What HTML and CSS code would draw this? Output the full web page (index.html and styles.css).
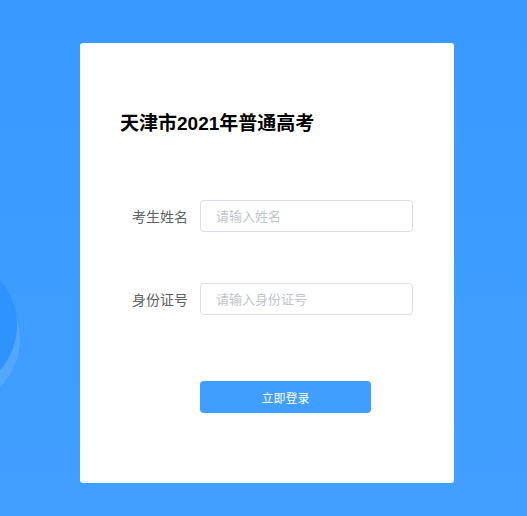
FILE: index.html
```html
<!DOCTYPE html>
<html lang="zh-CN">
<head>
<meta charset="utf-8">
<title>天津市2021年普通高考</title>
<link rel="stylesheet" href="styles.css">
</head>
<body>
<div class="bg-ring"></div>
<div class="bg-circle"></div>
<main class="card">
  <h1 class="title">天津市2021年普通高考</h1>
  <form class="form">
    <div class="row">
      <label class="label" for="name">考生姓名</label>
      <input class="input" id="name" type="text" placeholder="请输入姓名">
    </div>
    <div class="row">
      <label class="label" for="idno">身份证号</label>
      <input class="input" id="idno" type="text" placeholder="请输入身份证号">
    </div>
    <div class="actions">
      <button class="btn" type="button">立即登录</button>
    </div>
  </form>
</main>
</body>
</html>
```

FILE: styles.css
```css
html, body {
  margin: 0;
  padding: 0;
  height: 100%;
}
body {
  position: relative;
  overflow: hidden;
  background: linear-gradient(180deg, #3899ff 0%, #3d9cff 50%, #429fff 100%);
  font-family: "Liberation Sans", "Noto Sans CJK SC", sans-serif;
}
.bg-circle {
  position: absolute;
  left: -119px;
  top: 257px;
  width: 136px;
  height: 136px;
  border-radius: 50%;
  background: #2e92ff;
}
.bg-ring {
  position: absolute;
  left: -119px;
  top: 257px;
  width: 136px;
  height: 136px;
  border-radius: 50%;
  background: rgba(255, 255, 255, 0.1);
  transform: translate(3px, 14px);
}
.card {
  position: relative;
  box-sizing: border-box;
  width: 374px;
  height: 440px;
  margin: 43px 0 0 80px;
  padding: 68px 40px 0 40px;
  background: #fff;
  border-radius: 3px;
}
.title {
  margin: 0;
  font-size: 19px;
  line-height: 26px;
  font-weight: bold;
  color: #000;
}
.form {
  margin-top: 63px;
}
.row {
  display: flex;
  align-items: center;
  margin-bottom: 51px;
}
.label {
  box-sizing: border-box;
  width: 80px;
  padding-right: 12px;
  text-align: right;
  font-size: 14px;
  color: #606266;
}
.input {
  box-sizing: border-box;
  width: 213px;
  height: 32px;
  padding: 0 15px;
  border: 1px solid #dcdfe6;
  border-radius: 4px;
  font-family: inherit;
  font-size: 13px;
  color: #606266;
  outline: none;
}
.input::placeholder {
  color: #c0c4cc;
}
.actions {
  padding-left: 80px;
  padding-top: 15px;
}
.btn {
  width: 171px;
  height: 32px;
  border: none;
  border-radius: 4px;
  background: #409eff;
  color: #fff;
  font-family: inherit;
  font-size: 12px;
  cursor: pointer;
}
```
